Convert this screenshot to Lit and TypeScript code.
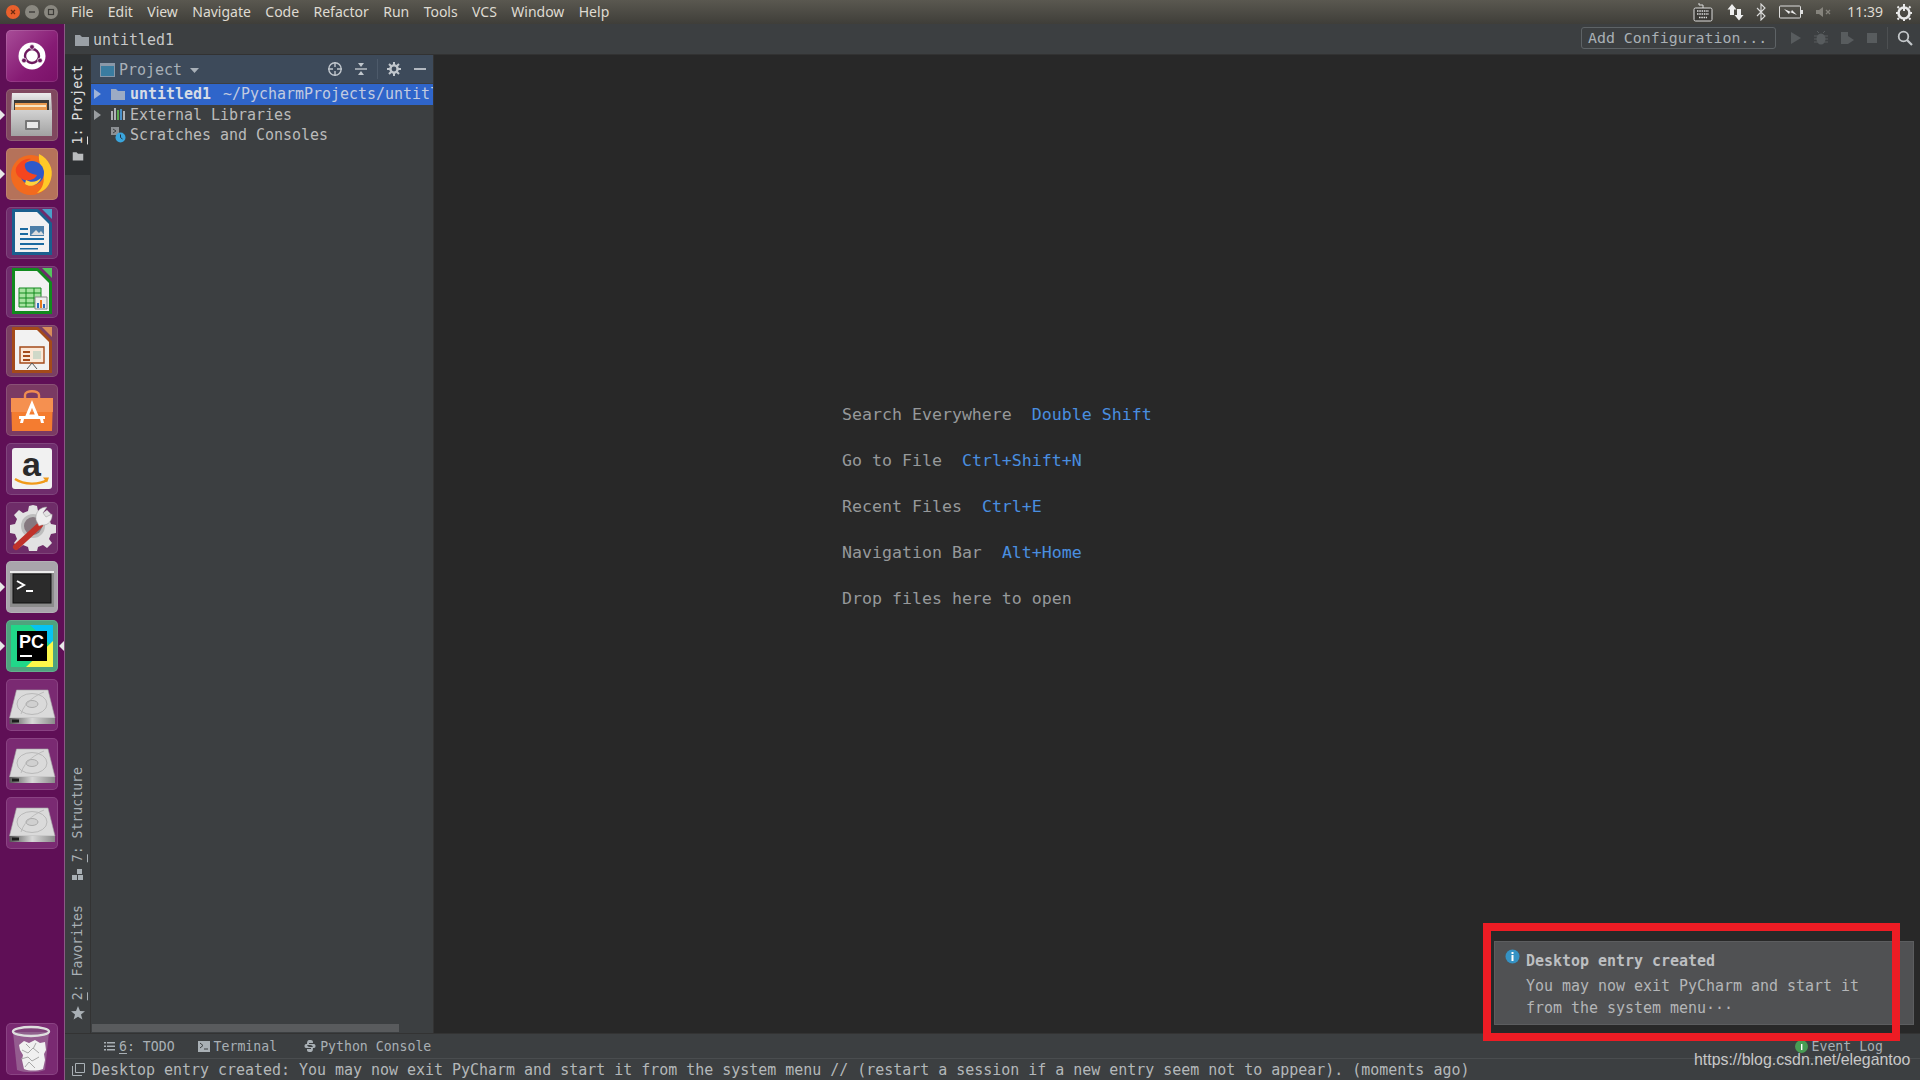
import { LitElement, html, css, svg } from 'lit';
import { customElement } from 'lit/decorators.js';

const disk = svg`
    <path d="M10.500 11h31.500l7 28H3.500z" fill="#dadada" stroke="#a5a5a5" stroke-width=".6"/>
    <path d="M3.500 39h45.500v6H3.500z" fill="url(#diskBase)"/>
    <path d="M6 40.500h7v3H6z" fill="#1c1c1c"/>
    <ellipse cx="26" cy="25" rx="15" ry="10.500" fill="none" stroke="#b4b4b4" stroke-width=".9"/>
    <ellipse cx="26" cy="25" rx="6" ry="3.500" fill="#d0d0d0" stroke="#a0a0a0" stroke-width=".8"/>
    <path d="M38 13c-7 3-19 9-23 22" fill="none" stroke="#b4b4b4" stroke-width=".8"/>`;

// tiles of the launcher, top to bottom
const launcherItems: { bg: string; pip?: boolean; pipRight?: boolean; art: unknown }[] = [
    { bg: 'linear-gradient(135deg,#a84d98,#861b74 60%,#7a1168)', art: svg`
        <circle cx="26" cy="26" r="13.500" fill="#fff"/>
        <circle cx="26" cy="26" r="7" fill="none" stroke="#6d1a5e" stroke-width="2.400"/>
        <circle cx="26" cy="17" r="2.400" fill="#6d1a5e" stroke="#fff" stroke-width=".7"/>
        <circle cx="18" cy="30.500" r="2.400" fill="#6d1a5e" stroke="#fff" stroke-width=".7"/>
        <circle cx="34" cy="30.500" r="2.400" fill="#6d1a5e" stroke="#fff" stroke-width=".7"/>` },
    { bg: '#80485f', pip: true, art: svg`
        <path d="M6 4h39l1 18H5z" fill="url(#cabTop)"/>
        <path d="M8 11h35v10H8z" fill="#3c3a38"/>
        <path d="M9 14h32v8H9z" fill="#e99a4f"/>
        <path d="M9 16h31v2H9z" fill="#f8e5c4"/>
        <path d="M5 21h41v26H5z" fill="url(#cabFront)"/>
        <rect x="19" y="31" width="15" height="10" rx="1" fill="#767676"/>
        <rect x="21" y="33" width="11" height="6" fill="#e8e8e8"/>` },
    { bg: '#b5725a', pip: true, art: svg`
        <circle cx="25" cy="27" r="20" fill="#f26a1f"/>
        <path d="M33 6c10 5 15 15 12 25-2 8-8 13-14 14 6-5 8-12 6-19-1-7-5-11-4-20z" fill="#ffc928"/>
        <circle cx="26" cy="25" r="12" fill="#2f59c9"/>
        <path d="M10 20c3-6 9-10 15-9-5 2-7 5-6 8 1 5 6 7 12 8-2 5-10 7-15 4-5-2-7-7-6-11z" fill="#f5451f"/>
        <path d="M20 32c5 3 11 2 15-2-2 7-11 10-16 6z" fill="#ffd23c"/>` },
    { bg: '#6f2c6c', art: svg`
        <path d="M6 2h26l14 14v32H6z" fill="#1a5f8e"/>
        <path d="M9 5h22l12 12v28H9z" fill="#f2f2f2"/>
        <path d="M36 2h10v10z" fill="#4aa0c8"/>
        <path d="M14 21h8v2h-8zM14 26h8v2h-8zM14 31h24v2H14zM14 36h24v2H14zM14 41h18v1.500H14z" fill="#1a6aa0"/>
        <path d="M24 19h14v10H24z" fill="#4d7fa8"/>
        <path d="M25 28l5-5 3 3 2-2 3 4z" fill="#ddd"/>` },
    { bg: '#6f2c6c', art: svg`
        <path d="M6 2h26l14 14v32H6z" fill="#128a1e"/>
        <path d="M9 5h22l12 12v28H9z" fill="#f2f2f2"/>
        <path d="M36 2h10v10z" fill="#55c45e"/>
        <path d="M13 22h22v19H13z" fill="#a6e3a0" stroke="#128a1e"/>
        <path d="M13 27h22M13 32h22M13 37h22M20 22v19M28 22v19" stroke="#128a1e" fill="none"/>
        <path d="M29 31h12v12H29z" fill="#eee" stroke="#888"/>
        <path d="M31 37h2v5h-2z" fill="#2d6fc0"/><path d="M34 34h2v8h-2z" fill="#e8791e"/><path d="M37 38h2v4h-2z" fill="#2d6fc0"/>` },
    { bg: '#7a3f62', art: svg`
        <path d="M6 2h26l14 14v32H6z" fill="#a44a1a"/>
        <path d="M9 5h22l12 12v28H9z" fill="#f2f2f2"/>
        <path d="M36 2h10v10z" fill="#d98d5a"/>
        <path d="M14 22h24v16H14z" fill="#fbe8d8" stroke="#a44a1a" stroke-width="1.400"/>
        <path d="M17 26h7v2h-7zM17 30h7v2h-7zM17 34h7v2h-7z" fill="#a44a1a"/>
        <path d="M27 26h8v8h-8z" fill="#cfd8c8"/>
        <path d="M26 38l-5 6M26 38l5 6" stroke="#555" fill="none"/>` },
    { bg: '#7a3a63', art: svg`
        <path d="M19 15v-4c0-5 14-5 14 0v4" fill="none" stroke="#f08c50" stroke-width="2.400"/>
        <path d="M5 14h42l-1 33H6z" fill="#f47c30"/>
        <path d="M5 14h42v14H5z" fill="#f59050"/>
        <path d="M26 20l5 12h-10z" fill="none" stroke="#fff" stroke-width="3"/>
        <path d="M13 32h26v3H13z" fill="#fff"/>
        <path d="M18 35h-3l-1 4h3zM34 35h3l1 4h-3z" fill="#fff"/>` },
    { bg: '#6f2c6c', art: svg`
        <rect x="6" y="5" width="40" height="41" rx="3" fill="#f1f1f1"/>
        <text x="25.500" y="33" text-anchor="middle" font-family="Liberation Sans" font-weight="700" font-size="34" fill="#2a2a2a">a</text>
        <path d="M9 36c9 6 24 6 32 1" fill="none" stroke="#f09a1a" stroke-width="2.200"/>
        <path d="M37 34.500l6 0-2 5z" fill="#f09a1a"/>` },
    { bg: '#6e2c68', art: svg`
        <g transform="translate(1 -2)">
            <path d="M26 5l4 1 1 5 5 2 4-3 5 5-3 4 2 5 5 1v8l-5 1-2 5 3 4-5 5-4-3-5 2-1 4h-8l-1-4-5-2-4 3-5-5 3-4-2-5-5-1v-8l5-1 2-5-3-4 5-5 4 3 5-2 1-5z" fill="#e2e2e2"/>
            <circle cx="26" cy="26" r="12" fill="#bdbdbd"/>
            <circle cx="26" cy="26" r="9" fill="#85787f"/>
        </g>
        <path d="M10 45l24-22" stroke="#c0322a" stroke-width="6" stroke-linecap="round"/>
        <path d="M33 24l-3-6c-1-8 4-13 11-13l-4 6 3 4 6-3c1 6-4 12-10 11z" fill="#eee" stroke="#999" stroke-width=".5"/>` },
    { bg: '#a9a5ab', pip: true, art: svg`
        <rect x="4" y="10" width="44" height="36" fill="#8b8b8b"/>
        <rect x="4" y="10" width="44" height="2" fill="#ececec"/>
        <rect x="7" y="13" width="38" height="29" fill="#2b2b2b" stroke="#111"/>
        <path d="M11 20l7 4-7 4" fill="none" stroke="#fff" stroke-width="2"/>
        <path d="M20 30h7" stroke="#fff" stroke-width="2"/>` },
    { bg: '#4fa37e', pip: true, pipRight: true, art: svg`
        <rect x="5" y="5" width="42" height="42" fill="#21d789"/>
        <path d="M24 5h23v22z" fill="#07c3f2"/>
        <path d="M20 47l27-26v26z" fill="#fcf84a"/>
        <rect x="11" y="11" width="30" height="30" fill="#000"/>
        <text x="13" y="28" font-family="Liberation Sans" font-weight="700" font-size="18" fill="#fff">PC</text>
        <path d="M14 36h12" stroke="#fff" stroke-width="2"/>` },
    { bg: '#7a2a72', art: disk },
    { bg: '#7a2a72', art: disk },
    { bg: '#7a2a72', art: disk },
];

const folder = (c: string, s = 16) => html`<svg width=${s} height=${s} viewBox="0 0 16 16"><path d="M1 3h5l2 2h7v9H1z" fill=${c}/></svg>`;

@customElement('app-root')
class AppRoot extends LitElement {
    static styles = css`
        :host {
            display: block;
            width: 1920px;
            height: 1080px;
            overflow: hidden;
            position: relative;
            font-family: 'DejaVu Sans Mono', monospace;
            font-size: 14.96px;
            color: #bbbbbb;
        }
        svg { display: block; flex: none; }

        .topbar {
            height: 24px;
            background: linear-gradient(#5a5850, #3f3e39);
            display: flex;
            align-items: center;
            color: #dfdbd2;
            font-family: 'Noto Sans', sans-serif;
            font-size: 14px;
            line-height: 22px;
        }
        .topbar > * { margin-top: -1px; }
        .win-btns { display: flex; gap: 5px; padding-left: 6px; width: 71px; box-sizing: border-box; }
        .menu { display: flex; gap: 14.400px; }
        .tray { margin-left: auto; display: flex; align-items: center; }

        .body { display: flex; height: 1056px; }

        .launcher {
            flex: none;
            box-sizing: border-box;
            background: #5f0f56;
            border-right: 1px solid #8a5a84;
            width: 65px;
            padding: 6px 0 5px 6px;
            display: flex;
            flex-direction: column;
            gap: 7px;
        }
        .tile {
            width: 52px;
            height: 52px;
            border-radius: 5px;
            position: relative;
            box-shadow: inset 0 0 0 1px rgba(255, 255, 255, 0.12);
        }
        .tile.trash { margin-top: auto; }
        .pip {
            position: absolute;
            left: -6px;
            top: 21px;
            border-left: 5px solid #e8e8e8;
            border-top: 5px solid transparent;
            border-bottom: 5px solid transparent;
        }
        .pip.right {
            left: auto;
            right: -6px;
            border-left: none;
            border-right: 5px solid #e8e8e8;
        }

        .ide { flex: 1; display: flex; flex-direction: column; background: #3c3f41; min-width: 0; }

        .navbar {
            height: 31px;
            flex: none;
            box-sizing: border-box;
            border-bottom: 1px solid #323232;
            display: flex;
            align-items: center;
            padding-left: 9px;
            gap: 3px;
            color: #c8c8c8;
            padding-top: 2px;
        }
        .actions { margin-left: auto; display: flex; align-items: center; }
        .config {
            width: 195px;
            height: 22px;
            box-sizing: border-box;
            border: 1px solid #5e6366;
            border-radius: 3px;
            font-size: 14.9px;
            line-height: 20px;
            padding-left: 6px;
            color: #a9b0b5;
            margin-top: -5px;
            white-space: nowrap;
        }

        .main { flex: 1; display: flex; min-height: 0; }

        .stripe {
            width: 26px;
            flex: none;
            box-sizing: border-box;
            border-right: 1px solid #333;
            display: flex;
            flex-direction: column;
            justify-content: space-between;
            font-size: 13.2px;
            color: #a9b0b5;
        }
        .vtab {
            display: flex;
            flex-direction: column;
            align-items: center;
            gap: 6px;
            padding: 10px 0 6px;
        }
        .vtab.active { background: #2e3133; color: #e0e0e0; height: 120px; box-sizing: border-box; }
        .vtab.bottom { padding: 0; margin-bottom: 24px; }
        .vtab.last { margin-bottom: 13px; }
        .vtext { writing-mode: vertical-rl; transform: rotate(180deg); white-space: pre; line-height: 25px; width: 25px; }
        .vtab u { text-underline-offset: 2px; }

        .project { width: 343px; flex: none; display: flex; flex-direction: column; border-right: 1px solid #333; box-sizing: border-box; }
        .proj-head {
            height: 28px;
            flex: none;
            box-sizing: border-box;
            background: #3d4a5a;
            display: flex;
            align-items: center;
            padding: 1px 0 0 9px;
            gap: 3px;
            color: #a8b0b8;
        }
        .proj-tools { margin-left: auto; display: flex; align-items: center; gap: 11px; padding-right: 6px; margin-top: -1px; }
        .tool-sep { width: 1px; height: 20px; background: #4d5a6a; margin: 0 -2px; }
        .tool-min { margin-left: 2px; }
        .tree { padding-top: 1px; flex: 1; }
        .row { height: 20.5px; display: flex; align-items: center; white-space: nowrap; overflow: hidden; padding-left: 2px; }
        .row.selected { background: #2f65ca; color: #d6dce6; }
        .row .name { margin-left: 4px; }
        .row b { font-weight: 700; }
        .row .path { margin-left: 12px; color: #c2cbe0; }
        .arrow { width: 17px; flex: none; display: flex; padding-left: 1px; box-sizing: border-box; }
        .scroll { height: 8px; width: 307px; background: #595b5d; margin: 0 0 1px 1px; flex: none; }

        .editor { flex: 1; background: #282828; padding: 349px 0 0 408px; font-size: 16.6px; color: #96999b; }
        .hint { height: 46px; white-space: pre; line-height: 22px; }
        .key { color: #4a8fe0; margin-left: 10px; }

        .tabs {
            height: 26px;
            flex: none;
            box-sizing: border-box;
            border-top: 1px solid #333;
            border-bottom: 1px solid #4a4d4f;
            display: flex;
            align-items: center;
            font-size: 13.2px;
            padding-left: 39px;
            color: #a9b0b5;
        }
        .tabs .tab { display: flex; align-items: center; gap: 4px; white-space: pre; margin-right: 23px; }
        .tabs .tab.wide { margin-right: 27px; }
        .tabs .tab u { text-underline-offset: 2px; }
        .event { margin-left: auto; margin-right: 37px; display: flex; align-items: center; gap: 4px; white-space: pre; }

        .status {
            height: 21px;
            flex: none;
            display: flex;
            align-items: center;
            padding-left: 7px;
            gap: 7px;
            white-space: pre;
            color: #b4b8ba;
        }

        .balloon {
            position: absolute;
            left: 1494px;
            top: 941px;
            width: 420px;
            height: 84px;
            box-sizing: border-box;
            background: #505153;
            border: 1px solid #5c5d5f;
            padding: 8px 0 0 31px;
            line-height: 22px;
            color: #b4b6b8;
        }
        .balloon .title { font-weight: 700; color: #bdbfc1; margin-bottom: 3px; }
        .balloon .info { position: absolute; left: 10px; top: 7px; }
        .mark {
            position: absolute;
            left: 1483px;
            top: 923px;
            width: 417px;
            height: 118px;
            box-sizing: border-box;
            border: 8px solid #ed1c24;
        }
        .watermark {
            position: absolute;
            left: 1694px;
            top: 1051px;
            font-family: 'Liberation Sans', sans-serif;
            font-size: 15.9px;
            color: #c8c8c8;
            white-space: nowrap;
        }
    `;

    private renderTopbar() {
        const menus = ['File', 'Edit', 'View', 'Navigate', 'Code', 'Refactor', 'Run', 'Tools', 'VCS', 'Window', 'Help'];
        return html`
            <div class="topbar">
                <div class="win-btns">
                    <svg width="14" height="14" viewBox="0 0 14 14"><circle cx="7" cy="7" r="7" fill="#e9602c"/><path d="M5 5l4 4M9 5l-4 4" stroke="#6b2a10" stroke-width="1.200"/></svg>
                    <svg width="14" height="14" viewBox="0 0 14 14"><circle cx="7" cy="7" r="7" fill="#8a8880"/><path d="M4 7h6" stroke="#3d3c38" stroke-width="1.400"/></svg>
                    <svg width="14" height="14" viewBox="0 0 14 14"><circle cx="7" cy="7" r="7" fill="#8a8880"/><rect x="4.500" y="4.500" width="5" height="5" fill="none" stroke="#3d3c38" stroke-width="1.200"/></svg>
                </div>
                <div class="menu">${menus.map((m) => html`<span>${m}</span>`)}</div>
                <div class="tray">
                    <svg width="20" height="20" viewBox="0 0 20 20" style="margin-right:14px"><path d="M10 6V3h-4V1" fill="none" stroke="#ddd"/><rect x="1" y="6" width="18" height="13" rx="1.500" fill="#3a3935" stroke="#ddd"/><path d="M4 9h12M4 12h12M6 15.500h8" stroke="#ddd" stroke-width="1.600" stroke-dasharray="1.500 .8"/></svg>
                    <svg width="18" height="18" viewBox="0 0 18 18" style="margin-right:11px"><path d="M5 1l4.500 5.500H7V12H3V6.500H.5z" fill="#eee"/><path d="M12 17.500l-4.500-5.500H10V6h4v6h2.500z" fill="#eee"/></svg>
                    <svg width="10" height="18" viewBox="0 0 10 18" style="margin-right:13px"><path d="M1 5l8 8-4 4V1l4 4-8 8" fill="none" stroke="#ddd" stroke-width="1.100"/></svg>
                    <svg width="25" height="14" viewBox="0 0 25 14" style="margin-right:12px"><rect x=".5" y="1" width="21" height="12" rx="1" fill="none" stroke="#ddd"/><path d="M22 5h2v4h-2z" fill="#ddd"/><path d="M5 4l7 3 1-2 5 5-7-3-1 2z" fill="#eee"/></svg>
                    <svg width="16" height="14" viewBox="0 0 16 14" style="margin-right:15px"><path d="M0 5h3l4-3v10L3 9H0z" fill="#85837c"/><path d="M10 5l4 4M14 5l-4 4" stroke="#85837c" stroke-width="1.300"/></svg>
                    <span style="margin-right:13px">11:39</span>
                    <svg width="16" height="18" viewBox="0 0 16 18" style="margin-right:8px"><circle cx="8" cy="10" r="5.500" fill="none" stroke="#e8e8e8" stroke-width="2.600"/><path d="M8 1v7" stroke="#e8e8e8" stroke-width="2"/><path d="M8 15.500v2.500M2 10H0M16 10h-2M3 5L1.500 3.500M13 5l1.500-1.500M3 15l-1.500 1.500M13 15l1.500 1.500" stroke="#e8e8e8" stroke-width="2"/></svg>
                </div>
            </div>
        `;
    }

    private renderLauncher() {
        return html`
            <div class="launcher">
                <svg width="0" height="0" style="position:absolute">
                    <defs>
                        <linearGradient id="diskBase"><stop offset="0" stop-color="#555"/><stop offset=".5" stop-color="#d8d8d8"/><stop offset="1" stop-color="#8a8a8a"/></linearGradient>
                        <linearGradient id="cabTop" x2="0" y2="1"><stop offset="0" stop-color="#ececec"/><stop offset="1" stop-color="#b0b0b0"/></linearGradient>
                        <linearGradient id="cabFront" x2="0" y2="1"><stop offset="0" stop-color="#d2d2d2"/><stop offset="1" stop-color="#a2a2a2"/></linearGradient>
                    </defs>
                </svg>
                ${launcherItems.map(
                    (item) => html`
                        <div class="tile" style="background:${item.bg}">
                            ${item.pip ? html`<div class="pip"></div>` : ''}
                            ${item.pipRight ? html`<div class="pip right"></div>` : ''}
                            <svg width="52" height="52" viewBox="0 0 52 52">${item.art}</svg>
                        </div>
                    `
                )}
                <div class="tile trash" style="background:#7a2a72">
                    <svg width="52" height="52" viewBox="0 0 52 52">
                        <path d="M7 9l4 38c8 3 20 3 28 0l4-38z" fill="#b49ab4" opacity=".45"/>
                        <path d="M13 22l5-4 5 2 6-3 5 3 5-1 1 8-2 4 1 6-2 9c-6 2-14 2-19 0l-2-9 1-5-3-5z" fill="#f0f0f0"/>
                        <path d="M16 27l6 3 5-5 6 5M15 36l7-2 4 4 7-4M20 21l4 4M30 20l-3 6M19 44l4-5 6 6" fill="none" stroke="#a8a8a8"/>
                        <ellipse cx="25" cy="8.500" rx="18" ry="4.500" fill="#8a6a8a" fill-opacity=".4" stroke="#dedede" stroke-width="2.400"/>
                    </svg>
                </div>
            </div>
        `;
    }

    private renderStripe() {
        return html`
            <div class="stripe">
                <div class="vtab active">
                    <span class="vtext"><u>1</u>: Project</span>
                    ${folder('#b9bcbe', 12)}
                </div>
                <div>
                    <div class="vtab bottom">
                        <span class="vtext"><u>7</u>: Structure</span>
                        <svg width="12" height="12" viewBox="0 0 12 12"><path d="M5 0h5v5H5zM0 6h5v5H0zM6 6h5v5H6z" fill="#a9b0b5"/></svg>
                    </div>
                    <div class="vtab bottom last">
                        <span class="vtext"><u>2</u>: Favorites</span>
                        <svg width="14" height="14" viewBox="0 0 14 14"><path d="M7 0l2 5 5 .3-4 3.200 1.400 5.100L7 10.800l-4.400 2.800L4 8.500 0 5.300 5 5z" fill="#a9b0b5"/></svg>
                    </div>
                </div>
            </div>
        `;
    }

    private renderProject() {
        const arrow = (c: string) => html`<span class="arrow"><svg width="8" height="10" viewBox="0 0 8 10"><path d="M0 0l7 5-7 5z" fill=${c}/></svg></span>`;
        return html`
            <div class="project">
                <div class="proj-head">
                    <svg width="16" height="14" viewBox="0 0 16 14"><rect x=".5" y=".5" width="14" height="13" fill="#3a7ca0" stroke="#8a98a8"/><path d="M1 1h13v2H1z" fill="#8a98a8"/></svg>
                    <span>Project</span>
                    <svg width="10" height="6" viewBox="0 0 10 6" style="margin:3px 0 0 5px"><path d="M0 0h9L4.500 5z" fill="#a8b0b8"/></svg>
                    <div class="proj-tools">
                        <svg width="16" height="16" viewBox="0 0 16 16"><circle cx="8" cy="8" r="6.200" fill="none" stroke="#c0c6cc" stroke-width="1.400"/><path d="M8 1v5M8 10v5M1 8h5M10 8h5" stroke="#c0c6cc" stroke-width="1.400"/></svg>
                        <svg width="14" height="16" viewBox="0 0 14 16"><path d="M1 8h12" stroke="#c0c6cc" stroke-width="1.400"/><path d="M4 2h6L7 6zM4 14h6l-3-4z" fill="#c0c6cc"/></svg>
                        <div class="tool-sep"></div>
                        <svg width="14" height="14" viewBox="0 0 14 14"><circle cx="7" cy="7" r="3.600" fill="none" stroke="#c0c6cc" stroke-width="2.400"/><path d="M7 0v3M7 11v3M0 7h3M11 7h3M2 2l2 2M10 10l2 2M2 12l2-2M10 4l2-2" stroke="#c0c6cc" stroke-width="2"/></svg>
                        <svg class="tool-min" width="13" height="14" viewBox="0 0 13 14"><path d="M0 7h12" stroke="#c0c6cc" stroke-width="1.800"/></svg>
                    </div>
                </div>
                <div class="tree">
                    <div class="row selected">${arrow('#9fb4d8')}${folder('#9cabc4')}<span class="name"><b>untitled1</b></span><span class="path">~/PycharmProjects/untitled1</span></div>
                    <div class="row">
                        ${arrow('#9a9da0')}
                        <svg width="16" height="16" viewBox="0 0 16 16"><path d="M1 4h2v9H1z" fill="#aeb2b5"/><path d="M4 1h2v12H4z" fill="#aeb2b5"/><path d="M7 3h2v10H7z" fill="#5aa84e"/><path d="M10 2h2v11h-2z" fill="#4a90c8"/><path d="M13 4h2v9h-2z" fill="#aeb2b5"/></svg>
                        <span class="name">External Libraries</span>
                    </div>
                    <div class="row">
                        <span class="arrow"></span>
                        <svg width="16" height="16" viewBox="0 0 16 16"><path d="M1 0h8v8H1z" fill="#8c9094"/><path d="M3 2l3 2-3 2" fill="none" stroke="#3c3f41"/><circle cx="10.500" cy="10.500" r="5" fill="#3aa5dc"/><path d="M10.500 7.500v3l2 1.500" fill="none" stroke="#234"/></svg>
                        <span class="name">Scratches and Consoles</span>
                    </div>
                </div>
                <div class="scroll"></div>
            </div>
        `;
    }

    render() {
        const hints = [
            ['Search Everywhere', 'Double Shift'],
            ['Go to File', 'Ctrl+Shift+N'],
            ['Recent Files', 'Ctrl+E'],
            ['Navigation Bar', 'Alt+Home'],
            ['Drop files here to open', ''],
        ];
        return html`
            ${this.renderTopbar()}
            <div class="body">
                ${this.renderLauncher()}
                <div class="ide">
                    <div class="navbar">
                        ${folder('#9aa0a6')}
                        <span>untitled1</span>
                        <div class="actions">
                            <div class="config">Add Configuration...</div>
                            <svg width="14" height="14" viewBox="0 0 14 14" style="margin:-4px 0 0 13px"><path d="M2 1l10 6-10 6z" fill="#585c5e"/></svg>
                            <svg width="14" height="14" viewBox="0 0 14 14" style="margin:-4px 0 0 11px"><ellipse cx="7" cy="8" rx="4.500" ry="5.500" fill="#585c5e"/><path d="M0 5h14M0 8h14M0 11h14M5 2L3 0M9 2l2-2" stroke="#585c5e"/></svg>
                            <svg width="15" height="14" viewBox="0 0 15 14" style="margin:-4px 0 0 12px"><path d="M1 1h7v12H1z" fill="#585c5e"/><path d="M8 5l6 4-6 4z" fill="#585c5e"/></svg>
                            <svg width="12" height="12" viewBox="0 0 12 12" style="margin:-4px 0 0 11px"><path d="M1 1h10v10H1z" fill="#585c5e"/></svg>
                            <div style="width:1px;height:22px;background:#4d5052;margin:-4px 0 0 9px"></div>
                            <svg width="16" height="16" viewBox="0 0 16 16" style="margin:-4px 7px 0 9px"><circle cx="6.500" cy="6.500" r="4.800" fill="none" stroke="#c4c8ca" stroke-width="1.800"/><path d="M10 10l5 5" stroke="#c4c8ca" stroke-width="2.200"/></svg>
                        </div>
                    </div>
                    <div class="main">
                        ${this.renderStripe()}
                        ${this.renderProject()}
                        <div class="editor">
                            ${hints.map(
                                ([label, key]) => html`<div class="hint">${label}${key ? html`<span class="key"> ${key}</span>` : ''}</div>`
                            )}
                        </div>
                    </div>
                    <div class="tabs">
                        <div class="tab">
                            <svg width="11" height="10" viewBox="0 0 11 10"><path d="M0 1h2v1.500H0zM0 4.500h2V6H0zM0 8h2v1.500H0zM3 1h8v1.500H3zM3 4.500h8V6H3zM3 8h8v1.500H3z" fill="#a9b0b5"/></svg>
                            <span><u>6</u>: TODO</span>
                        </div>
                        <div class="tab wide">
                            <svg width="12" height="11" viewBox="0 0 12 11"><rect width="12" height="11" fill="#a9b0b5"/><path d="M2 2l3 2.500L2 7" fill="none" stroke="#3c3f41"/><path d="M6 8h4" stroke="#3c3f41"/></svg>
                            <span>Terminal</span>
                        </div>
                        <div class="tab">
                            <svg width="12" height="12" viewBox="0 0 12 12"><path d="M6 0c3 0 3 1 3 3H5v1h5c2 0 2 4 0 4H9c0-2-1-3-3-3H3C3 2 3 0 6 0zM2 4h1c0 2 1 3 3 3h3c0 3 0 5-3 5s-3-1-3-3h4V8H2C0 8 0 4 2 4z" fill="#a9b0b5"/></svg>
                            <span>Python Console</span>
                        </div>
                        <div class="event">
                            <svg width="13" height="13" viewBox="0 0 13 13"><circle cx="6.500" cy="6.500" r="6.500" fill="#499c54"/><path d="M6 4h1.400v6H6z" fill="#fff"/></svg>
                            <span>Event Log</span>
                        </div>
                    </div>
                    <div class="status">
                        <svg width="13" height="13" viewBox="0 0 13 13"><path d="M3.500 .5h9V9.500h-9z" fill="none" stroke="#a9b0b5"/><path d="M.5 3v9.500H10" fill="none" stroke="#a9b0b5"/></svg>
                        <span>Desktop entry created: You may now exit PyCharm and start it from the system menu // (restart a session if a new entry seem not to appear). (moments ago)</span>
                    </div>
                </div>
            </div>
            <div class="balloon">
                <svg class="info" width="15" height="15" viewBox="0 0 15 15"><circle cx="7.500" cy="7.500" r="7" fill="#3592c4"/><path d="M6.500 3h2v2h-2zM6.500 6h2v6h-2z" fill="#fff"/></svg>
                <div class="title">Desktop entry created</div>
                <div>You may now exit PyCharm and start it</div>
                <div>from the system menu···</div>
            </div>
            <div class="mark"></div>
            <div class="watermark">https://blog.csdn.net/elegantoo</div>
        `;
    }
}

declare global {
    interface HTMLElementTagNameMap {
        'app-root': AppRoot;
    }
}
